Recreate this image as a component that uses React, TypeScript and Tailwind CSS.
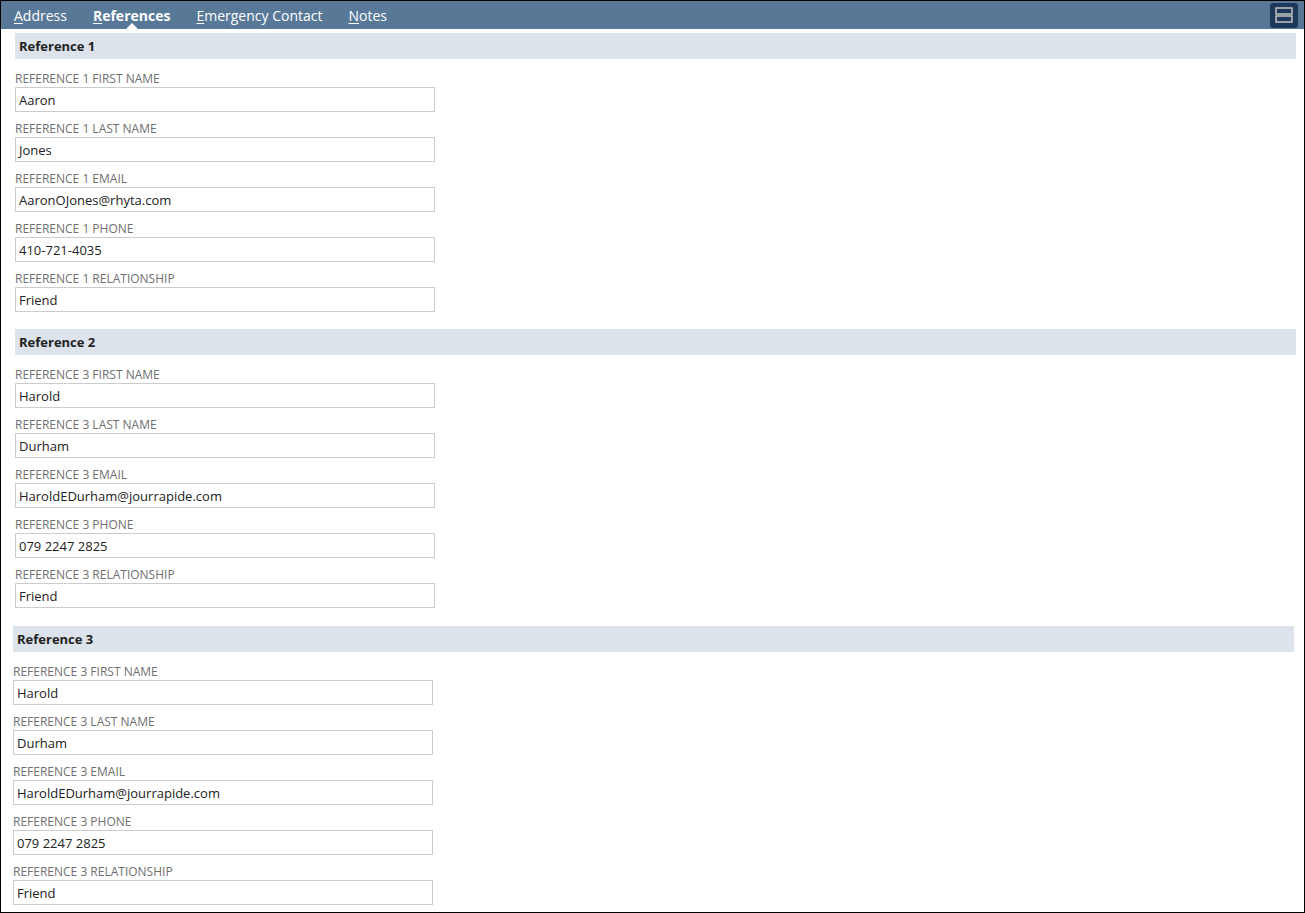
import React from 'react';

interface Field {
  label: string;
  value: string;
}

interface Section {
  title: string;
  fields: Field[];
  shift?: boolean;
}

const sections: Section[] = [
  {
    title: 'Reference 1',
    fields: [
      { label: 'Reference 1 First Name', value: 'Aaron' },
      { label: 'Reference 1 Last Name', value: 'Jones' },
      { label: 'Reference 1 Email', value: 'AaronOJones@rhyta.com' },
      { label: 'Reference 1 Phone', value: '410-721-4035' },
      { label: 'Reference 1 Relationship', value: 'Friend' },
    ],
  },
  {
    title: 'Reference 2',
    fields: [
      { label: 'Reference 3 First Name', value: 'Harold' },
      { label: 'Reference 3 Last Name', value: 'Durham' },
      { label: 'Reference 3 Email', value: 'HaroldEDurham@jourrapide.com' },
      { label: 'Reference 3 Phone', value: '079 2247 2825' },
      { label: 'Reference 3 Relationship', value: 'Friend' },
    ],
  },
  {
    title: 'Reference 3',
    shift: true,
    fields: [
      { label: 'Reference 3 First Name', value: 'Harold' },
      { label: 'Reference 3 Last Name', value: 'Durham' },
      { label: 'Reference 3 Email', value: 'HaroldEDurham@jourrapide.com' },
      { label: 'Reference 3 Phone', value: '079 2247 2825' },
      { label: 'Reference 3 Relationship', value: 'Friend' },
    ],
  },
];

const tabs = [
  { first: 'A', rest: 'ddress' },
  { first: 'R', rest: 'eferences', active: true },
  { first: 'E', rest: 'mergency Contact' },
  { first: 'N', rest: 'otes' },
];

function TabBar() {
  return (
    <div className="flex h-[28px] items-center justify-between bg-[#587898] pl-[13px] pr-[6px]">
      <div className="flex gap-[26px]">
        {tabs.map((t) => (
          <div
            key={t.first}
            className={`relative pt-[2px] text-[14px] leading-[26px] text-white ${t.active ? 'font-bold' : ''}`}
          >
            <span className="underline underline-offset-2">{t.first}</span>
            {t.rest}
            {t.active && (
              <span className="absolute bottom-0 left-1/2 h-0 w-0 -translate-x-1/2 border-x-[6px] border-b-[6px] border-x-transparent border-b-white" />
            )}
          </div>
        ))}
      </div>
      <button className="flex h-[25px] w-[28px] items-center justify-center rounded-[3px] bg-[#1c385a]">
        <svg width="18" height="16" viewBox="0 0 18 16" fill="none">
          <rect x="1" y="1" width="16" height="6" stroke="#c4c4c4" strokeWidth="1.5" />
          <rect x="1" y="9" width="16" height="6" stroke="#c4c4c4" strokeWidth="1.5" />
        </svg>
      </button>
    </div>
  );
}

function SectionBlock({ section }: { section: Section }) {
  return (
    <div className={section.shift ? 'ml-[12px] mr-[10px] mt-[1px]' : 'ml-[14px] mr-[8px]'}>
      <div className="h-[26px] bg-[#dce3eb] pl-[4px] text-[13px] font-bold leading-[26px] text-[#222]">
        {section.title}
      </div>
      <div className="mt-[11px] flex flex-col gap-[8px]">
        {section.fields.map((f, i) => (
          <div key={i}>
            <div className="pt-[1px] text-[12px] uppercase leading-[16px] text-[#707070]">{f.label}</div>
            <div className="h-[25px] w-[420px] border border-[#cccccc] bg-white pl-[3px] pt-[1px] text-[13px] leading-[22px] text-[#222]">
              {f.value}
            </div>
          </div>
        ))}
      </div>
    </div>
  );
}

export default function App() {
  return (
    <div
      className="h-[913px] w-[1305px] overflow-hidden border border-black bg-white"
      style={{ fontFamily: '"Open Sans", "Noto Sans", sans-serif' }}
    >
      <TabBar />
      <div className="mt-[4px] flex flex-col gap-[17px]">
        {sections.map((s) => (
          <SectionBlock key={s.title} section={s} />
        ))}
      </div>
    </div>
  );
}
